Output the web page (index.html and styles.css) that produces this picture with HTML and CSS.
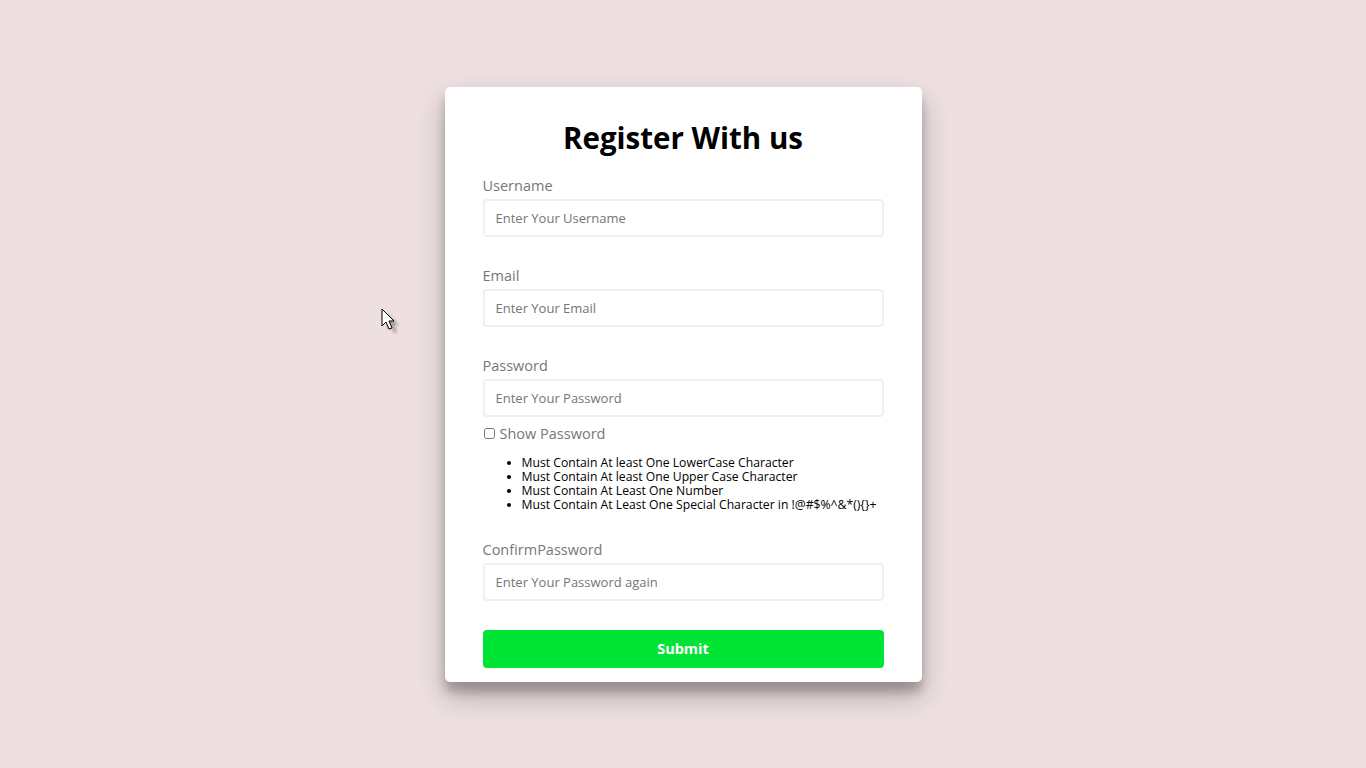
FILE: index.html
```html
<!DOCTYPE html>
<html lang="en">
<head>
<meta charset="utf-8">
<title>Register With us</title>
<link rel="stylesheet" href="styles.css">
</head>
<body>
<div class="container">
  <form class="form">
    <h2 class="title">Register With us</h2>
    <div class="form-control">
      <label for="username">Username</label>
      <input type="text" id="username" placeholder="Enter Your Username">
    </div>
    <div class="form-control">
      <label for="email">Email</label>
      <input type="text" id="email" placeholder="Enter Your Email">
    </div>
    <div class="form-control pw">
      <label for="password">Password</label>
      <input type="password" id="password" placeholder="Enter Your Password">
      <div class="show">
        <input type="checkbox" id="show"><label for="show" class="show-label">Show Password</label>
      </div>
      <ul class="rules">
        <li>Must Contain At least One LowerCase Character</li>
        <li>Must Contain At least One Upper Case Character</li>
        <li>Must Contain At Least One Number</li>
        <li>Must Contain At Least One Special Character in !@#$%^&amp;*(){}+</li>
      </ul>
    </div>
    <div class="form-control last">
      <label for="password2">ConfirmPassword</label>
      <input type="password" id="password2" placeholder="Enter Your Password again">
    </div>
    <button type="button" class="submit">Submit</button>
  </form>
</div>
<svg class="cursor" width="24" height="32" viewBox="0 0 24 32">
  <defs>
    <filter id="blur" x="-50%" y="-50%" width="200%" height="200%">
      <feGaussianBlur stdDeviation="1.5"/>
    </filter>
  </defs>
  <path d="M1 1 L1 18 L5 14 L8 21 L11 20 L8 13 L13 13 Z" fill="#000" opacity="0.3" transform="translate(5,4)" filter="url(#blur)"/>
  <path d="M1 1 L1 18 L5 14 L8 21 L11 20 L8 13 L13 13 Z" fill="#fff" stroke="#000" stroke-width="1" stroke-linejoin="miter"/>
</svg>
</body>
</html>
```
FILE: styles.css
```css
* { box-sizing: border-box; }
html, body { margin: 0; padding: 0; }
body {
  background: #eee0e0;
  font-family: "Open Sans", "Noto Sans", sans-serif;
  min-height: 100vh;
  display: flex;
  align-items: center;
  justify-content: center;
}
.container {
  width: 477px;
  background: #fff;
  border-radius: 5px;
  box-shadow: 0 14px 28px rgba(0,0,0,0.25), 0 10px 10px rgba(0,0,0,0.2);
}
.form {
  padding: 20px 38px 14px;
}
.title {
  margin: 0 0 8px;
  text-align: center;
  font-size: 29.5px;
  line-height: 62px;
  font-weight: 700;
  color: #000;
}
.form-control {
  margin-bottom: 30px;
}
.form-control label {
  display: block;
  font-size: 14.5px;
  line-height: 18px;
  color: #777;
  margin-bottom: 4px;
}
.form-control input[type="text"],
.form-control input[type="password"] {
  display: block;
  width: 100%;
  height: 38px;
  border: 2px solid #f0f0f0;
  border-radius: 4px;
  padding: 0 11px;
  font-family: inherit;
  font-size: 13px;
  color: #333;
  outline: none;
}
.form-control input::placeholder { color: #757575; }
.show {
  display: flex;
  align-items: center;
  margin-top: 8px;
}
.show input {
  margin: 0 5px 0 1px;
  width: 11px;
  height: 11px;
}
.form-control .show-label {
  display: inline;
  margin: 0;
}
.rules {
  margin: 13px 0 0;
  padding-left: 39px;
  font-size: 12.2px;
  line-height: 14px;
  color: #000;
}
.form-control.pw { margin-bottom: 29px; }
.form-control.last { margin-bottom: 29px; }
.submit {
  display: block;
  width: 100%;
  height: 38px;
  border: none;
  border-radius: 4px;
  background: #00e436;
  color: #fff;
  font-family: inherit;
  font-weight: 700;
  font-size: 14.5px;
  cursor: pointer;
}
.cursor {
  position: absolute;
  left: 381px;
  top: 308px;
}
```
